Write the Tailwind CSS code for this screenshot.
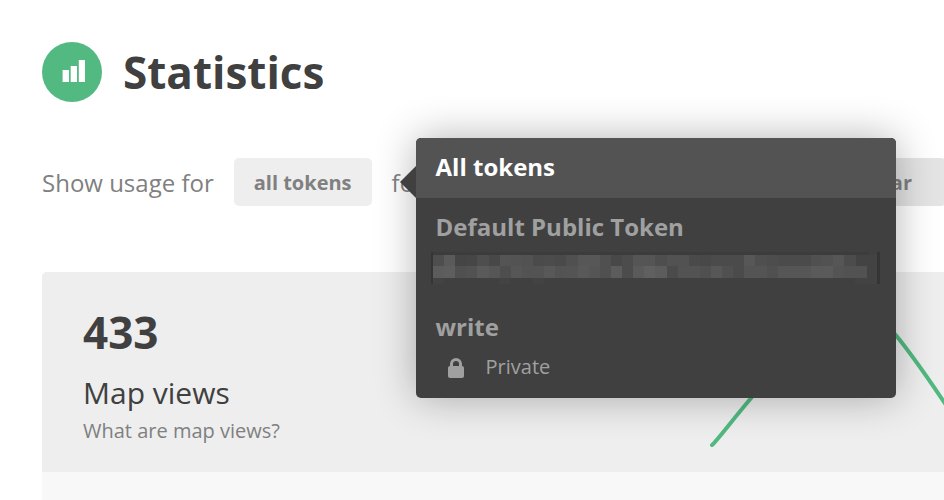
<!DOCTYPE html>
<html lang="en">
<head>
<meta charset="utf-8">
<meta name="viewport" content="width=device-width, initial-scale=1">
<title>Statistics</title>
<script src="https://cdn.jsdelivr.net/npm/@tailwindcss/browser@4"></script>
</head>
<body class="min-h-screen overflow-hidden bg-white font-['Open_Sans','Noto_Sans',sans-serif] text-[#404040]">
<main class="flex min-h-screen flex-col pl-[42px] pt-[42px]">
  <header class="flex h-[60px] items-center gap-[21px]">
    <span class="flex size-[60px] items-center justify-center rounded-full bg-[#52b980]">
      <svg class="size-[60px]" viewBox="0 0 60 60" fill="#fff" aria-hidden="true"><path d="M20.6 28H27v12h-6.400zM28.700 24H35v16h-6.300zM36.800 18H43v22h-6.200z"/></svg>
    </span>
    <h1 class="text-[44px] leading-[60px] font-bold">Statistics</h1>
  </header>

  <section class="mt-14 flex h-12 items-center gap-5 whitespace-nowrap text-2xl text-[#808080]">
    <span class="pt-0.5">Show usage for</span>
    <div class="relative">
      <button type="button" aria-haspopup="menu" aria-expanded="true" class="h-12 rounded-[5px] bg-[#eee] px-5 pt-0.5 text-xl font-bold">all tokens</button>

      <div role="menu" class="absolute -top-5 left-full z-10 ml-11 w-[480px] rounded-[5px] bg-[#404040] text-[#a0a0a0] shadow-[0_0_40px_rgba(0,0,0,0.3)]">
        <svg class="absolute top-7 -left-4 h-8 w-4" viewBox="0 0 16 32" fill="#404040" aria-hidden="true"><path d="M16 0v32L0 16z"/></svg>
        <button type="button" role="menuitem" class="flex h-[60px] w-full rounded-t-[5px] bg-[#535353] px-5 text-left leading-[58px] font-bold text-white">All tokens</button>
        <button type="button" role="menuitem" class="flex h-[100px] w-full flex-col px-[15px] text-left font-bold">
          <span class="block h-[54px] px-[5px] leading-[58px]">Default Public Token</span>
          <svg id="redacted" class="block h-8 w-full" viewBox="0 0 450 32" preserveAspectRatio="none" shape-rendering="crispEdges" role="img" aria-label="Hidden token">
            <path fill="#3c3c3c" d="M2 0h436v3H2z"/>
            <path fill="#434343" d="M2 26h11v6H2zM68 26h11v6H68zM102 26h11v6H102zM424 3h22v29h-22z"/>
            <path fill="#353535" d="M0 0h2v32H0zM446 0h3v32h-3z"/>
          </svg>
        </button>
        <button type="button" role="menuitem" class="flex h-[100px] w-full flex-col px-5 text-left">
          <span class="block h-[50px] leading-[58px] font-bold">write</span>
          <span class="flex h-[50px] items-start gap-5 pl-[10px] text-xl leading-[38px]">
            <svg class="h-[38px] w-5" viewBox="0 0 20 38" aria-hidden="true"><rect x="2" y="18" width="16" height="12" rx="2" fill="#a0a0a0"/><path d="M5.5 19v-3a4.5 4.5 0 0 1 9 0v3" fill="none" stroke="#a0a0a0" stroke-width="3"/></svg>
            <span>Private</span>
          </span>
        </button>
      </div>
    </div>
    <span class="pt-0.5">for</span>
    <button type="button" class="-mr-0.5 h-12 min-w-0 flex-1 rounded-[5px] bg-[#e4e4e4] pt-0.5 pr-[34px] text-right text-xl font-bold">this year</button>
  </section>

  <section class="mt-[66px] flex flex-1 flex-col rounded-tl-[5px] bg-[#f8f8f8]">
    <div class="flex h-[200px] justify-between rounded-tl-[5px] bg-[#eee]">
      <div class="pt-[30px] pl-[41px]">
        <p class="text-[44px] leading-[60px] font-bold">433</p>
        <h2 class="mt-2.5 text-[30px] leading-[42px]">Map views</h2>
        <a href="#map-views" class="block text-xl leading-[34px] text-[#808080]">What are map views?</a>
      </div>
      <svg class="h-[200px] w-[240px]" viewBox="0 0 240 200" fill="none" stroke="#52b980" stroke-width="4" stroke-linecap="round" aria-hidden="true"><path d="M8 173C12 170 30 146 48 125C84 82 122 28 150 28C166 28 184 54 195 67C210 86 224 106 242 133"/></svg>
    </div>
  </section>
</main>
<script>
  // Grey level of every block in the two rows that stand in for the hidden token.
  const rows = [
    '4e 5a 45 46 4e 48 54 53 52 4b 4c 4a 50 57 57 50 48 4c 55 55 4e 52 52 4a 48 4b 4b 4b 57 4f 4d 4b 4b 4b 50 52 56 4c',
    '5c 5e 50 52 5a 56 4e 56 53 53 58 53 54 59 55 50 5c 4c 5a 60 5c 4b 53 53 50 57 50 4b 54 54 50 56 56 56 5a 5a 54 52 52'
  ];
  const art = document.getElementById('redacted');
  rows.forEach((row, r) => row.split(' ').forEach((level, i) => {
    const block = document.createElementNS('http://www.w3.org/2000/svg', 'rect');
    const left = Math.round(i * 11.12), right = Math.round((i + 1) * 11.12);
    block.setAttribute('x', 2 + left);
    block.setAttribute('y', r ? 14 : 3);
    block.setAttribute('width', right - left);
    block.setAttribute('height', r ? 12 : 11);
    block.setAttribute('fill', '#' + level.repeat(3));
    art.append(block);
  }));
</script>
</body>
</html>
